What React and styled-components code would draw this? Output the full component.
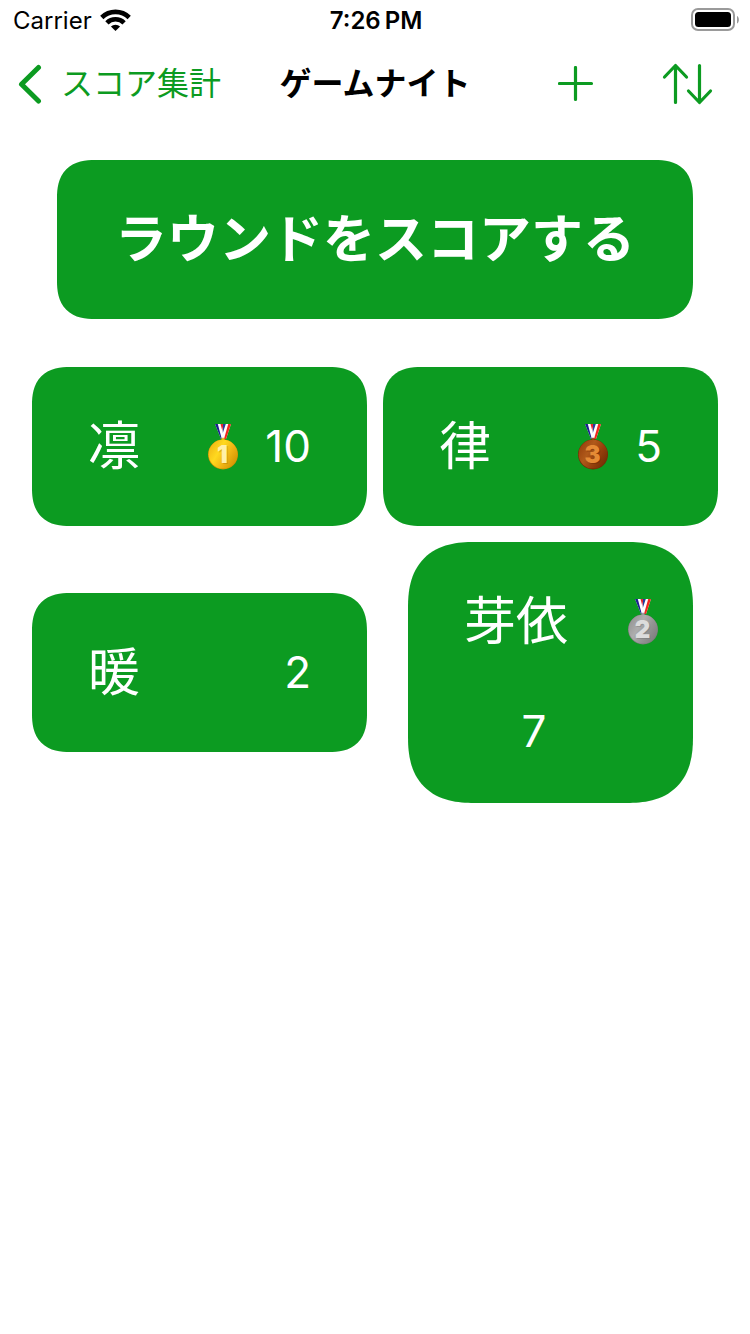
import React from "react";
import styled, { createGlobalStyle, css } from "styled-components";

const GREEN = "#0c9b21";

const GlobalStyle = createGlobalStyle`
  *, *::before, *::after { box-sizing: border-box; }
  body {
    margin: 0;
    background: #fff;
    color: #000;
    font-family: Inter, "Noto Sans CJK JP", sans-serif;
  }
  button { font: inherit; border: 0; margin: 0; cursor: pointer; }
  svg { display: block; }
`;

const StatusBar = styled.header`
  display: grid;
  grid-template-columns: 1fr auto 1fr;
  align-items: center;
  height: 40px;
  padding: 0 11px 0 13px;
  font-size: 24px;
`;

const Carrier = styled.div`
  display: flex;
  align-items: center;
  gap: 8px;
`;

const Clock = styled.time`
  font-weight: 600;
`;

const Battery = styled.div`
  justify-self: end;
`;

const NavBar = styled.nav`
  display: grid;
  grid-template-columns: 1fr auto 1fr;
  align-items: center;
  height: 88px;
  padding: 0 18px;
  font-size: 32px;
  line-height: 38px;
`;

const BackLink = styled.a`
  display: flex;
  align-items: center;
  gap: 19px;
  color: ${GREEN};
  text-decoration: none;
  white-space: nowrap;
`;

const Title = styled.h1`
  margin: 0;
  font-size: 32px;
  font-weight: 700;
  white-space: nowrap;
`;

const NavActions = styled.div`
  display: flex;
  justify-content: flex-end;
  align-items: center;
  gap: 60px;
  padding-right: 14px;
`;

const IconButton = styled.button`
  padding: 4px;
  background: none;
  color: ${GREEN};
`;

const Main = styled.main`
  display: flex;
  flex-direction: column;
  gap: 48px;
  padding: 32px;
`;

const tile = css`
  background: ${GREEN};
  color: #fff;
  border-radius: 32px;
  @supports (corner-shape: superellipse(1.3)) {
    border-radius: 38px;
    corner-shape: superellipse(1.3);
  }
`;

const RoundButton = styled.button`
  ${tile}
  margin: 0 25px;
  padding: 48px 24px;
  font-size: 52px;
  line-height: 63px;
  font-weight: 700;
`;

const Players = styled.div`
  display: grid;
  grid-template-columns: 1fr 1fr;
  gap: 16px;
  align-items: center;
`;

const PlayerCard = styled.button`
  ${tile}
  display: flex;
  align-items: center;
  padding: 48px 56px;
  line-height: 63px;
  ${(p) =>
    p.$wrapped &&
    css`
      flex-wrap: wrap;
      justify-self: center;
      width: 285px;
      row-gap: 52px;
      padding: 48px 23px 46px 56px;
      border-radius: 56px;
      @supports (corner-shape: superellipse(1.3)) {
        border-radius: 66px;
      }
    `}
`;

const Name = styled.span`
  flex: 1;
  text-align: left;
  font-size: 52px;
`;

const Score = styled.span`
  font-size: 44px;
  ${(p) =>
    p.$wrapped
      ? css`
          width: 140px;
          line-height: 52px;
          text-align: center;
        `
      : css`
          margin-left: 15px;
        `}
`;

const MedalSlot = styled.span`
  display: flex;
  justify-content: center;
  width: 54px;
`;

const MEDALS = {
  1: { light: "#ffd91f", mid: "#f0b414", dark: "#cf9200", digit: "#fff0a8", shade: "#a87000" },
  2: { light: "#adadad", mid: "#949494", dark: "#7c7c7c", digit: "#dcdcdc", shade: "#6e6e6e" },
  3: { light: "#b0591a", mid: "#96400c", dark: "#712c04", digit: "#e58a35", shade: "#5c2200" },
};

function Medal({ place }) {
  const m = MEDALS[place];
  const id = `medal-${place}`;
  return (
    <MedalSlot>
      <svg width="32" height="48" viewBox="0 0 32 48" role="img" aria-label={`${place}位`}>
        <defs>
          <linearGradient id={id} x1="0" y1="0.2" x2="1" y2="0.8">
            <stop offset="0" stopColor={m.mid} />
            <stop offset="0.35" stopColor={m.light} />
            <stop offset="0.65" stopColor={m.mid} />
            <stop offset="1" stopColor={m.dark} />
          </linearGradient>
        </defs>
        <path d="M8 1h8l3 15h-5z" fill="#fff" />
        <path d="M8 1h2.800l4 15H14z" fill="#1b1f8f" />
        <path d="M13.500 1H16l3 12-1.500 3z" fill="#e8262b" />
        <path d="M16.500 1H24l-5 15h-3.500l-1-4z" fill="#fff" />
        <path d="M21.200 1H24l-5 15h-2z" fill="#f0281e" />
        <path d="M16 1h2.800l-3 9z" fill="#243a9c" />
        <circle cx="16" cy="16.500" r="1.500" fill={m.light} stroke={m.dark} strokeWidth="0.600" />
        <circle cx="16" cy="31.500" r="15" fill={m.dark} />
        <circle cx="16" cy="31.200" r="14.400" fill={`url(#${id})`} />
        <g fontFamily="Inter, sans-serif" fontSize="24" fontWeight="900" textAnchor="middle">
          <text x="16.500" y="40.600" fill={m.shade} opacity="0.350">{place}</text>
          <text x="15.500" y="40" fill={m.digit}>{place}</text>
        </g>
      </svg>
    </MedalSlot>
  );
}

function WifiIcon() {
  return (
    <svg width="31" height="22" viewBox="0 0 31 22" aria-hidden="true">
      <g fill="none" stroke="#000" strokeWidth="4.600">
        <path d="M1.800 8.500a19.400 19.400 0 0 1 27.400 0" />
        <path d="M6.900 13.800a12.200 12.200 0 0 1 17.200 0" />
      </g>
      <path d="M15.500 22l-4.600-4.400a6.600 6.600 0 0 1 9.200 0z" />
    </svg>
  );
}

function BatteryIcon() {
  return (
    <svg width="48" height="24" viewBox="0 0 48 24" aria-hidden="true">
      <rect x="1" y="1" width="42" height="21" rx="6" fill="none" stroke="#9a9a9a" strokeWidth="2" />
      <rect x="4" y="4" width="36" height="15" rx="3.500" />
      <path d="M46 8c2.500 1.200 2.500 6.300 0 7.500z" fill="#9a9a9a" />
    </svg>
  );
}

function ChevronIcon() {
  return (
    <svg width="24" height="40" viewBox="0 0 24 40" aria-hidden="true">
      <path d="M20.500 3.500L3.500 20.300 20.500 37" fill="none" stroke="currentColor" strokeWidth="5" strokeLinecap="round" strokeLinejoin="round" />
    </svg>
  );
}

function PlusIcon() {
  return (
    <svg width="36" height="36" viewBox="0 0 36 36" aria-hidden="true">
      <path d="M17.500 1.500v32M1.500 17.500h32" fill="none" stroke="currentColor" strokeWidth="3.200" strokeLinecap="round" />
    </svg>
  );
}

function SortIcon() {
  return (
    <svg width="52" height="42" viewBox="0 0 52 42" aria-hidden="true">
      <path
        d="M13.500 39.500V2.500M2.500 14L13.500 2.500 24.500 14M37.500 2.500v37M26.500 28l11 11.500L48.500 28"
        fill="none"
        stroke="currentColor"
        strokeWidth="3.200"
        strokeLinecap="round"
        strokeLinejoin="round"
      />
    </svg>
  );
}

const PLAYERS = [
  { name: "凛", score: 10, place: 1 },
  { name: "律", score: 5, place: 3 },
  { name: "暖", score: 2 },
  { name: "芽依", score: 7, place: 2, wrapped: true },
];

export default function App() {
  return (
    <>
      <GlobalStyle />
      <StatusBar>
        <Carrier>
          Carrier
          <WifiIcon />
        </Carrier>
        <Clock>7:26{"\u2009"}PM</Clock>
        <Battery>
          <BatteryIcon />
        </Battery>
      </StatusBar>
      <NavBar>
        <BackLink href="#scores">
          <ChevronIcon />
          スコア集計
        </BackLink>
        <Title>ゲームナイト</Title>
        <NavActions>
          <IconButton aria-label="追加">
            <PlusIcon />
          </IconButton>
          <IconButton aria-label="並べ替え">
            <SortIcon />
          </IconButton>
        </NavActions>
      </NavBar>
      <Main>
        <RoundButton>ラウンドをスコアする</RoundButton>
        <Players>
          {PLAYERS.map((p) => (
            <PlayerCard key={p.name} $wrapped={p.wrapped}>
              <Name>{p.name}</Name>
              {p.place && <Medal place={p.place} />}
              <Score $wrapped={p.wrapped}>{p.score}</Score>
            </PlayerCard>
          ))}
        </Players>
      </Main>
    </>
  );
}
